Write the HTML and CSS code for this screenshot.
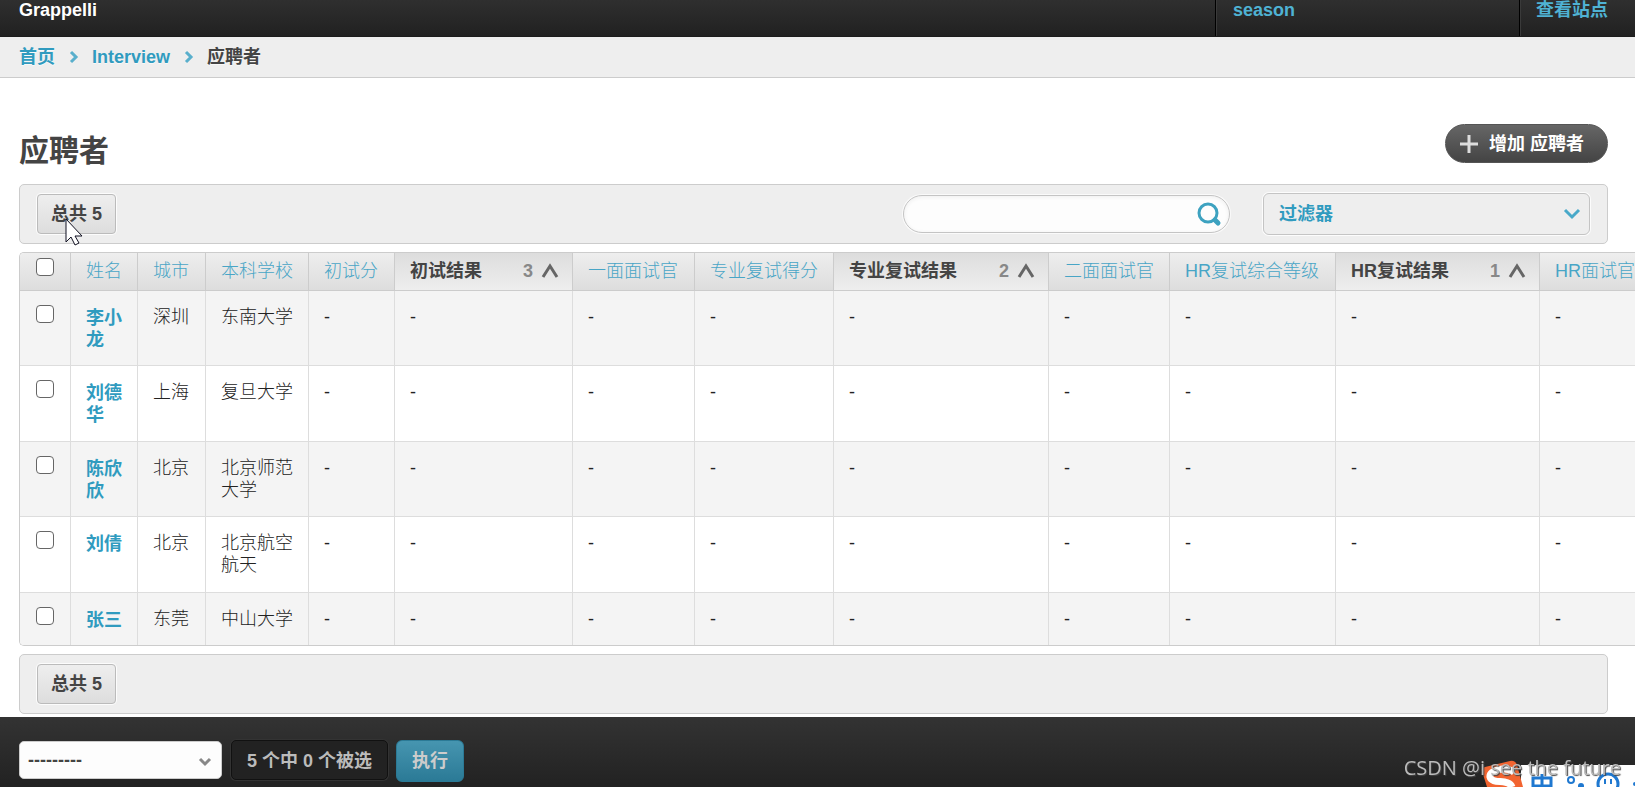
FILE: index.html
```html
<!DOCTYPE html>
<html lang="zh-CN">
<head>
<meta charset="utf-8">
<title>应聘者 | Grappelli</title>
<link rel="stylesheet" href="styles.css">
</head>
<body>
<header class="site-header">
  <strong class="branding">Grappelli</strong>
  <a class="user-link" href="#">season</a>
  <a class="site-link" href="#">查看站点</a>
</header>
<nav class="breadcrumbs">
  <a href="#">首页</a>
  <svg class="crumb-arrow" viewBox="0 0 8 12"><path d="M1 1l5 5-5 5"/></svg>
  <a href="#">Interview</a>
  <svg class="crumb-arrow" viewBox="0 0 8 12"><path d="M1 1l5 5-5 5"/></svg>
  <span>应聘者</span>
</nav>
<main class="content">
  <div class="title-row">
    <h1>应聘者</h1>
    <a class="add-button" href="#"><svg viewBox="0 0 20 20"><path d="M10 1v18M1 10h18"/></svg>增加 应聘者</a>
  </div>
  <div class="toolbar">
    <button class="count" type="button">总共 5</button>
    <form class="search">
      <input type="text" aria-label="搜索">
      <button type="button" aria-label="搜索"><svg viewBox="0 0 24 24"><circle cx="11" cy="11" r="9"/><path class="handle" d="M18 18l3 3"/></svg></button>
    </form>
    <button class="filter" type="button">过滤器<svg viewBox="0 0 16 10"><path d="M1 1l7 7 7-7"/></svg></button>
  </div>
  <div class="results">
    <table>
      <colgroup><col class="c-check"><col class="c-name"><col class="c-city"><col class="c-school"><col class="c-score"><col class="c-result"><col class="c-officer"><col class="c-second"><col class="c-second-result"><col class="c-officer2"><col class="c-hr"><col class="c-hr-result"><col class="c-hr-officer"></colgroup>
      <thead>
        <tr>
          <th class="check"><input type="checkbox" aria-label="全选"></th>
          <th><a href="#">姓名</a></th>
          <th><a href="#">城市</a></th>
          <th><a href="#">本科学校</a></th>
          <th><a href="#">初试分</a></th>
          <th class="sorted"><div><a href="#">初试结果</a><span>3</span><svg viewBox="0 0 18 14"><path d="M2 13l7-11 7 11"/></svg></div></th>
          <th><a href="#">一面面试官</a></th>
          <th><a href="#">专业复试得分</a></th>
          <th class="sorted"><div><a href="#">专业复试结果</a><span>2</span><svg viewBox="0 0 18 14"><path d="M2 13l7-11 7 11"/></svg></div></th>
          <th><a href="#">二面面试官</a></th>
          <th><a href="#">HR复试综合等级</a></th>
          <th class="sorted"><div><a href="#">HR复试结果</a><span>1</span><svg viewBox="0 0 18 14"><path d="M2 13l7-11 7 11"/></svg></div></th>
          <th><a href="#">HR面试官</a></th>
        </tr>
      </thead>
      <tbody>
        <tr><td class="check"><input type="checkbox" aria-label="李小龙"></td><td class="name"><a href="#">李小龙</a></td><td>深圳</td><td>东南大学</td><td>-</td><td>-</td><td>-</td><td>-</td><td>-</td><td>-</td><td>-</td><td>-</td><td>-</td></tr>
        <tr><td class="check"><input type="checkbox" aria-label="刘德华"></td><td class="name"><a href="#">刘德华</a></td><td>上海</td><td>复旦大学</td><td>-</td><td>-</td><td>-</td><td>-</td><td>-</td><td>-</td><td>-</td><td>-</td><td>-</td></tr>
        <tr><td class="check"><input type="checkbox" aria-label="陈欣欣"></td><td class="name"><a href="#">陈欣欣</a></td><td>北京</td><td>北京师范大学</td><td>-</td><td>-</td><td>-</td><td>-</td><td>-</td><td>-</td><td>-</td><td>-</td><td>-</td></tr>
        <tr><td class="check"><input type="checkbox" aria-label="刘倩"></td><td class="name"><a href="#">刘倩</a></td><td>北京</td><td>北京航空航天</td><td>-</td><td>-</td><td>-</td><td>-</td><td>-</td><td>-</td><td>-</td><td>-</td><td>-</td></tr>
        <tr><td class="check"><input type="checkbox" aria-label="张三"></td><td class="name"><a href="#">张三</a></td><td>东莞</td><td>中山大学</td><td>-</td><td>-</td><td>-</td><td>-</td><td>-</td><td>-</td><td>-</td><td>-</td><td>-</td></tr>
      </tbody>
    </table>
  </div>
  <div class="toolbar">
    <button class="count" type="button">总共 5</button>
  </div>
</main>
<footer class="actions">
  <div class="select-wrap">
    <select aria-label="动作"><option>---------</option></select>
    <svg viewBox="0 0 12 8"><path d="M1 1l5 5 5-5"/></svg>
  </div>
  <span class="selection">5 个中 0 个被选</span>
  <button class="run" type="button">执行</button>
</footer>
<svg class="ime" viewBox="0 0 154 40">
  <rect x="40" y="18" width="114" height="22" fill="#fff"/>
  <path d="M4 20L29 14Q34 13 36 18L42 40H6L1 24Q0 21 4 20z" fill="#f26430"/>
  <path d="M33 25C24 19 8 23 9 30C11 38 28 31 31 40" fill="none" stroke="#fff" stroke-width="7"/>
  <path d="M52 40V31h18v9M52 39h18M61 27v13" fill="none" stroke="#1f78d0" stroke-width="3"/>
  <circle cx="90" cy="33" r="3" fill="none" stroke="#1f78d0" stroke-width="2"/>
  <circle cx="100" cy="39" r="3" fill="#1f78d0"/>
  <circle cx="127" cy="37" r="10" fill="none" stroke="#1f78d0" stroke-width="3"/>
  <path d="M124 32v5M130 32v5" stroke="#1f78d0" stroke-width="2"/>
  <circle cx="154" cy="37" r="2" fill="#1f78d0"/>
</svg>
<div class="watermark">CSDN @i see the future</div>
<svg class="pointer" viewBox="0 0 19 28"><path d="M1 1v23l5-5 4 8 4-2-4-7h7z"/></svg>
</body>
</html>
```
FILE: styles.css
```css
* { box-sizing: border-box; }
body {
  margin: 0;
  height: 100vh;
  overflow: hidden;
  background: #fff;
  color: #444;
  font: 18px/22px "Liberation Sans", "Noto Sans CJK SC", sans-serif;
}
a { color: #309bbf; text-decoration: none; }
button, input, select { font: inherit; color: inherit; margin: 0; }
svg { display: block; fill: none; overflow: visible; }

.site-header {
  display: flex;
  height: 37px;
  background: linear-gradient(#2f2f2f, #212121);
  border-bottom: 1px solid #1c1c1c;
  font-weight: bold;
  line-height: 20px;
}
.branding { flex: 1; padding-left: 19px; color: #fff; }
.site-header a { color: #4fb2d3; border-left: 1px solid #000; box-shadow: inset 1px 0 #3a3a3a; }
.user-link { width: 304px; padding-left: 17px; }
.site-link { width: 116px; padding-left: 16px; }

.breadcrumbs {
  display: flex;
  align-items: center;
  height: 41px;
  padding: 0 19px;
  background: #eee;
  border-bottom: 1px solid #ccc;
  font-weight: bold;
  text-shadow: 0 1px #f8f8f8;
}
.crumb-arrow { width: 8px; height: 12px; margin: 0 14px 0 15px; stroke: #59afcc; stroke-width: 3; }

.content { padding: 46px 27px 0 19px; }
.title-row { display: flex; justify-content: space-between; align-items: flex-start; height: 60px; }
h1 { margin: 7px 0 0; font-size: 30px; line-height: 40px; }
.add-button {
  display: flex;
  align-items: center;
  gap: 10px;
  height: 39px;
  padding: 0 23px 0 13px;
  border: 1px solid #555;
  border-radius: 20px;
  background: linear-gradient(#666, #444);
  color: #fff;
  font-weight: bold;
}
.add-button svg { width: 20px; height: 20px; stroke: #ddd; stroke-width: 3; }

.toolbar {
  display: flex;
  align-items: center;
  height: 60px;
  padding: 0 17px;
  background: #eee;
  border: 1px solid #ccc;
  border-radius: 5px;
}
.count {
  height: 40px;
  padding: 0 13px;
  border: 1px solid #bbb;
  border-radius: 4px;
  background: linear-gradient(#eee, #ddd);
  box-shadow: 0 0 0 1px #fcfcfc;
  font-weight: bold;
}
.search {
  display: flex;
  align-items: center;
  width: 327px;
  height: 38px;
  margin-left: auto;
  border: 1px solid #c4c4c4;
  border-radius: 19px;
  background: #fdfdfd;
  box-shadow: 0 0 0 1px #fafafa, inset 0 1px 4px #eee;
}
.search input { flex: 1; min-width: 0; padding: 0 16px; border: 0; outline: 0; background: none; }
.search button { margin-right: 8px; padding: 0; border: 0; background: none; }
.search svg { width: 24px; height: 24px; stroke: #3da2c0; stroke-width: 3; }
.search .handle { stroke-width: 5; stroke-linecap: round; }
.filter {
  display: flex;
  align-items: center;
  justify-content: space-between;
  width: 327px;
  height: 42px;
  margin-left: 33px;
  padding: 0 9px 0 15px;
  border: 1px solid #c4c4c4;
  border-radius: 6px;
  background: #eee;
  box-shadow: 0 0 0 1px #fcfcfc;
  color: #309bbf;
  font-weight: bold;
}
.filter svg { width: 16px; height: 10px; stroke: #48a9c9; stroke-width: 3; }

.results {
  margin: 8px -27px 8px 0;
  overflow: hidden;
  border: 1px solid #ccc;
  border-right: 0;
  border-radius: 5px 0 0 5px;
}
table { width: 1700px; table-layout: fixed; border-collapse: separate; border-spacing: 0; }
.c-check { width: 51px; }
.c-name { width: 67px; }
.c-city { width: 68px; }
.c-school { width: 103px; }
.c-score { width: 86px; }
.c-result { width: 178px; }
.c-officer { width: 122px; }
.c-second { width: 139px; }
.c-second-result { width: 215px; }
.c-officer2 { width: 121px; }
.c-hr { width: 166px; }
.c-hr-result { width: 204px; }
th, td { padding: 15px 0 15px 15px; border-right: 1px solid #ddd; border-bottom: 1px solid #ddd; font-weight: 300; text-align: left; vertical-align: top; }
td { color: #222; }
th {
  height: 38px;
  padding-top: 7px;
  padding-bottom: 8px;
  border-color: #ccc;
  background: linear-gradient(#eee, #ddd);
  white-space: nowrap;
}
th a { color: #48a5c6; }
th.sorted { background: linear-gradient(#ddd, #eee); font-weight: bold; }
.sorted div { display: flex; align-items: center; padding-right: 13px; }
.sorted a { flex: 1; color: #444; }
.sorted span { margin-right: 8px; color: #888; }
.sorted svg { width: 18px; height: 14px; stroke: #666; stroke-width: 3; }
tbody tr:nth-child(odd) { background: #f4f4f4; }
tbody tr:nth-child(even) td { padding-bottom: 16px; }
tbody tr:last-child td { border-bottom: 0; }
td:nth-child(n+2) { padding-right: 14px; }
td a { font-weight: bold; }
tbody tr td.name { padding-top: 16px; }
tbody tr:nth-child(odd) td.name { padding-bottom: 14px; }
tbody tr:nth-child(even) td.name { padding-bottom: 15px; }
.check { padding-left: 16px; }
td.check { padding-top: 14px; }
th.check { padding-top: 5px; }
.check input {
  display: block;
  appearance: none;
  width: 18px;
  height: 18px;
  border: 1px solid #666;
  border-radius: 4px;
  background: #fff;
}

.actions {
  position: fixed;
  left: 0;
  right: 0;
  bottom: 0;
  display: flex;
  align-items: flex-start;
  height: 70px;
  padding: 23px 19px 0;
  background: linear-gradient(#333, #222);
  font-weight: bold;
}
.select-wrap { position: relative; width: 203px; margin: 1px 9px 0 0; }
.select-wrap select {
  display: block;
  appearance: none;
  width: 100%;
  height: 38px;
  padding: 0 8px;
  border: 1px solid #ccc;
  border-radius: 5px;
  background: #fdfdfd;
  font-weight: bold;
}
.select-wrap svg { position: absolute; right: 11px; top: 17px; width: 12px; height: 8px; stroke: #888; stroke-width: 3; pointer-events: none; }
.selection {
  height: 40px;
  margin-right: 8px;
  padding: 0 15px;
  border: 1px solid #111;
  border-radius: 5px;
  background: #222;
  box-shadow: 0 0 0 1px #333;
  color: #bbb;
  line-height: 40px;
}
.run {
  height: 42px;
  padding: 0 15px;
  border: 1px solid #2b7a96;
  border-radius: 6px;
  background: linear-gradient(#4695b0, #2b7a96);
  color: #ccc;
  font-weight: bold;
}

.ime { position: fixed; right: 0; bottom: 0; width: 154px; height: 40px; overflow: hidden; }
.watermark {
  position: fixed;
  right: 14px;
  bottom: 5px;
  color: #bbb;
  font: 20px/28px "Open Sans", sans-serif;
  text-shadow: 1px 1px 1px #444;
}
.pointer { position: absolute; left: 65px; top: 218px; width: 19px; height: 28px; fill: #fff; stroke: #112; stroke-width: 1; }
```
